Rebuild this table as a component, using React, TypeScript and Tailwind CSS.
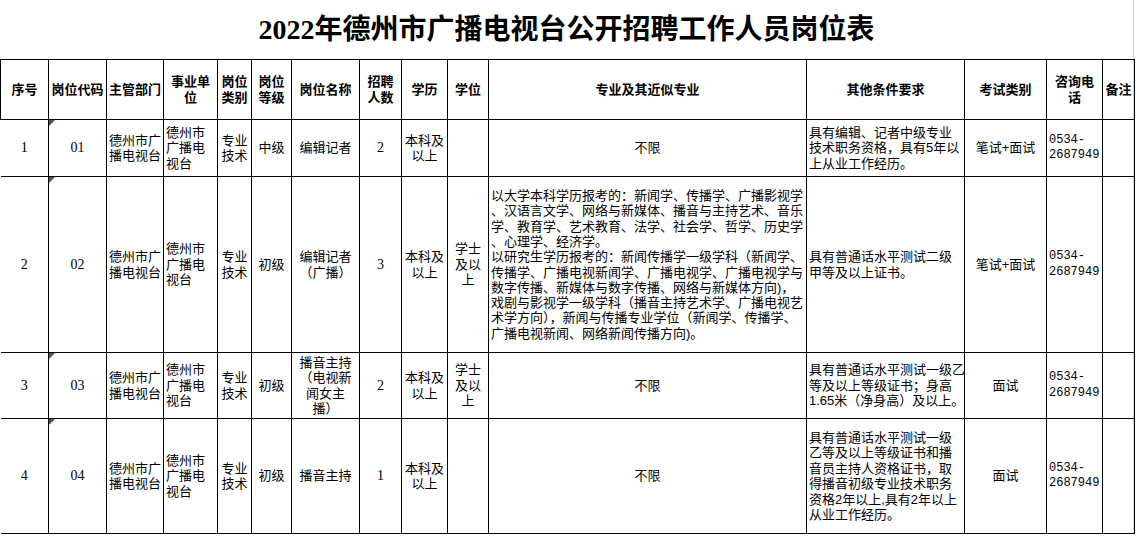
import type { ReactNode } from 'react';

type Row = {
  no: string;
  code: string;
  dept: string[];
  unit: string[];
  kind: string[];
  level: string;
  title: string[];
  count: string;
  edu: string[];
  degree: string[];
  major: string[];
  other: string[];
  exam: string;
  h: string;
};

const rows: Row[] = [
  {
    no: '1',
    code: '01',
    dept: ['德州市广', '播电视台'],
    unit: ['德州市', '广播电', '视台'],
    kind: ['专业', '技术'],
    level: '中级',
    title: ['编辑记者'],
    count: '2',
    edu: ['本科及', '以上'],
    degree: [],
    major: ['不限'],
    other: ['具有编辑、记者中级专业', '技术职务资格，具有5年以', '上从业工作经历。'],
    exam: '笔试+面试',
    h: 'h-[57px]',
  },
  {
    no: '2',
    code: '02',
    dept: ['德州市广', '播电视台'],
    unit: ['德州市', '广播电', '视台'],
    kind: ['专业', '技术'],
    level: '初级',
    title: ['编辑记者', '（广播）'],
    count: '3',
    edu: ['本科及', '以上'],
    degree: ['学士', '及以', '上'],
    major: [
      '以大学本科学历报考的：新闻学、传播学、广播影视学',
      '、汉语言文学、网络与新媒体、播音与主持艺术、音乐',
      '学、教育学、艺术教育、法学、社会学、哲学、历史学',
      '、心理学、经济学。',
      '以研究生学历报考的：新闻传播学一级学科（新闻学、',
      '传播学、广播电视新闻学、广播电视学、广播电视学与',
      '数字传播、新媒体与数字传播、网络与新媒体方向)，',
      '戏剧与影视学一级学科（播音主持艺术学、广播电视艺',
      '术学方向），新闻与传播专业学位（新闻学、传播学、',
      '广播电视新闻、网络新闻传播方向)。',
    ],
    other: ['具有普通话水平测试二级', '甲等及以上证书。'],
    exam: '笔试+面试',
    h: 'h-[176px]',
  },
  {
    no: '3',
    code: '03',
    dept: ['德州市广', '播电视台'],
    unit: ['德州市', '广播电', '视台'],
    kind: ['专业', '技术'],
    level: '初级',
    title: ['播音主持', '（电视新', '闻女主', '播）'],
    count: '2',
    edu: ['本科及', '以上'],
    degree: ['学士', '及以', '上'],
    major: ['不限'],
    other: ['具有普通话水平测试一级乙', '等及以上等级证书；身高', '1.65米（净身高）及以上。'],
    exam: '面试',
    h: 'h-[66px]',
  },
  {
    no: '4',
    code: '04',
    dept: ['德州市广', '播电视台'],
    unit: ['德州市', '广播电', '视台'],
    kind: ['专业', '技术'],
    level: '初级',
    title: ['播音主持'],
    count: '1',
    edu: ['本科及', '以上'],
    degree: [],
    major: ['不限'],
    other: [
      '具有普通话水平测试一级',
      '乙等及以上等级证书和播',
      '音员主持人资格证书，取',
      '得播音初级专业技术职务',
      '资格2年以上,具有2年以上',
      '从业工作经历。',
    ],
    exam: '面试',
    h: 'h-[115px]',
  },
];

const Lines = ({ lines }: { lines: string[] }) => (
  <>
    {lines.map((l, i) => (
      <div key={i} className="whitespace-nowrap">
        {l}
      </div>
    ))}
  </>
);

const Td = ({ children, className = '' }: { children?: ReactNode; className?: string }) => (
  <td className={`border border-black align-middle p-0 ${className}`}>{children}</td>
);

const Th = ({ lines }: { lines: string[] }) => (
  <th className="border border-black align-middle p-0 text-center font-bold leading-[16px]">
    <Lines lines={lines} />
  </th>
);

export default function App() {
  return (
    <div className="w-[1139px] h-[536px] overflow-hidden bg-white text-black font-['Liberation_Sans','Noto_Sans_CJK_SC',sans-serif] text-[13px]">
      <div className="w-[1134px] border-r border-gray-300">
        <h1 className="h-[59px] flex items-center justify-center text-[28px] font-bold font-['Liberation_Serif','Noto_Sans_CJK_SC',serif]">
          2022年德州市广播电视台公开招聘工作人员岗位表
        </h1>
        <table className="table-fixed border-collapse w-[1134px] leading-[15.5px]">
          <colgroup>
            <col className="w-[48px]" />
            <col className="w-[58px]" />
            <col className="w-[57px]" />
            <col className="w-[54px]" />
            <col className="w-[34px]" />
            <col className="w-[40px]" />
            <col className="w-[68px]" />
            <col className="w-[42px]" />
            <col className="w-[46px]" />
            <col className="w-[41px]" />
            <col className="w-[318px]" />
            <col className="w-[158px]" />
            <col className="w-[82px]" />
            <col className="w-[56px]" />
            <col className="w-[32px]" />
          </colgroup>
          <thead>
            <tr className="h-[60px]">
              <Th lines={['序号']} />
              <Th lines={['岗位代码']} />
              <Th lines={['主管部门']} />
              <Th lines={['事业单', '位']} />
              <Th lines={['岗位', '类别']} />
              <Th lines={['岗位', '等级']} />
              <Th lines={['岗位名称']} />
              <Th lines={['招聘', '人数']} />
              <Th lines={['学历']} />
              <Th lines={['学位']} />
              <Th lines={['专业及其近似专业']} />
              <Th lines={['其他条件要求']} />
              <Th lines={['考试类别']} />
              <Th lines={['咨询电', '话']} />
              <Th lines={['备注']} />
            </tr>
          </thead>
          <tbody>
            {rows.map((r) => (
              <tr key={r.no} className={r.h}>
                <Td className="text-center border-l-0 font-['Liberation_Serif',serif] text-[14px]">{r.no}</Td>
                <Td className="relative text-center font-['Liberation_Serif',serif] text-[14px]">
                  <span className="absolute left-0 top-0 w-0 h-0 border-t-[6px] border-r-[6px] border-t-[#2e6b2e] border-r-transparent" />
                  {r.code}
                </Td>
                <Td className="px-[2px]">
                  <Lines lines={r.dept} />
                </Td>
                <Td className="px-[2px]">
                  <Lines lines={r.unit} />
                </Td>
                <Td className="text-center">
                  <Lines lines={r.kind} />
                </Td>
                <Td className="text-center">{r.level}</Td>
                <Td className="text-center">
                  <Lines lines={r.title} />
                </Td>
                <Td className="text-center font-['Liberation_Serif',serif] text-[14px]">{r.count}</Td>
                <Td className="text-center">
                  <Lines lines={r.edu} />
                </Td>
                <Td className="text-center">
                  <Lines lines={r.degree} />
                </Td>
                <Td className={r.major.length > 1 ? 'px-[2px] leading-[15.3px]' : 'text-center'}>
                  <Lines lines={r.major} />
                </Td>
                <Td className="px-[2px] overflow-hidden">
                  <Lines lines={r.other} />
                </Td>
                <Td className="text-center">{r.exam}</Td>
                <Td className="px-[2px] font-['Liberation_Mono',monospace] text-[12px]">
                  <div>0534-</div>
                  <div>2687949</div>
                </Td>
                <Td />
              </tr>
            ))}
          </tbody>
        </table>
      </div>
    </div>
  );
}
